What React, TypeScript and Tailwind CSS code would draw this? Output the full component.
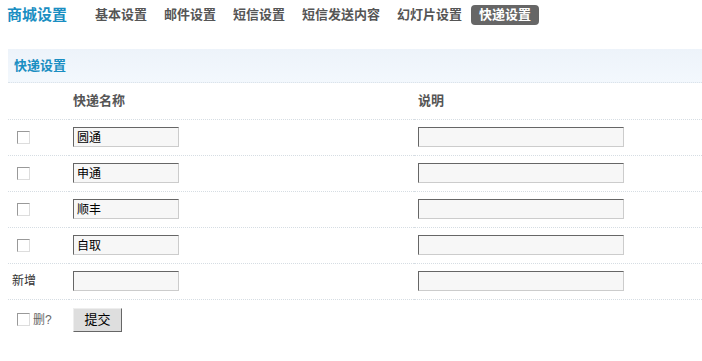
import { useState } from "react";

const navItems = ["基本设置", "邮件设置", "短信设置", "短信发送内容", "幻灯片设置", "快递设置"];
const ACTIVE_NAV = "快递设置";

const rows = ["圆通", "申通", "顺丰", "自取"];

const fontStack = "font-['Liberation_Sans','Noto_Sans_CJK_SC',sans-serif]";
const inputClass =
  "h-[20px] border border-t-[#666] border-l-[#666] border-b-[#ccc] border-r-[#ccc] bg-[#f7f7f7] px-[3px] text-[12px] leading-[18px] text-black outline-none";
const checkboxClass =
  "m-0 h-[13px] w-[13px] appearance-none border border-t-[#999] border-l-[#999] border-b-[#ddd] border-r-[#ddd] bg-white align-middle";
const rowClass = "border-b border-dotted border-[#d6dde3]";

export default function App() {
  const [names, setNames] = useState<string[]>(rows);
  const [notes, setNotes] = useState<string[]>(rows.map(() => ""));
  const [newName, setNewName] = useState("");
  const [newNote, setNewNote] = useState("");

  return (
    <div className={`min-h-screen w-[702px] bg-white ${fontStack}`}>
      <div className="flex h-[30px] items-center pl-[7px]">
        <h1 className="mr-[20px] text-[15px] font-bold leading-[20px] text-[#1a8ec2]">商城设置</h1>
        <nav className="flex items-center gap-[1px]">
          {navItems.map((item) => (
            <span
              key={item}
              className={
                item === ACTIVE_NAV
                  ? "rounded-[4px] bg-[#666] px-[8px] py-[1px] text-[13px] font-bold leading-[18px] text-white"
                  : "px-[8px] py-[1px] text-[13px] font-bold leading-[18px] text-[#555]"
              }
            >
              {item}
            </span>
          ))}
        </nav>
      </div>

      <div className="ml-[8px] mt-[19px]">
        <div className="flex h-[34px] items-center border-b border-dotted border-[#dbe3ea] bg-gradient-to-b from-[#edf3fa] to-[#f3f8fd] pl-[6px]">
          <span className="text-[13px] font-bold text-[#1a8ec2]">快递设置</span>
        </div>

        <table className="w-full border-collapse text-[12px] text-[#333]">
          <colgroup>
            <col className="w-[61px]" />
            <col className="w-[345px]" />
            <col />
          </colgroup>
          <thead>
            <tr className={`h-[36px] ${rowClass}`}>
              <th />
              <th className="px-[4px] text-left text-[13px] font-bold text-[#555]">快递名称</th>
              <th className="px-[4px] text-left text-[13px] font-bold text-[#555]">说明</th>
            </tr>
          </thead>
          <tbody>
            {names.map((name, i) => (
              <tr key={rows[i]} className={`h-[36px] ${rowClass}`}>
                <td className="pl-[9px]">
                  <input type="checkbox" className={checkboxClass} />
                </td>
                <td className="px-[4px]">
                  <input
                    className={`${inputClass} w-[106px]`}
                    value={name}
                    onChange={(e) => setNames(names.map((n, j) => (j === i ? e.target.value : n)))}
                  />
                </td>
                <td className="px-[4px]">
                  <input
                    className={`${inputClass} w-[206px]`}
                    value={notes[i]}
                    onChange={(e) => setNotes(notes.map((n, j) => (j === i ? e.target.value : n)))}
                  />
                </td>
              </tr>
            ))}
            <tr className={`h-[36px] ${rowClass}`}>
              <td className="px-[4px] text-[12px] text-[#333]">新增</td>
              <td className="px-[4px]">
                <input className={`${inputClass} w-[106px]`} value={newName} onChange={(e) => setNewName(e.target.value)} />
              </td>
              <td className="px-[4px]">
                <input className={`${inputClass} w-[206px]`} value={newNote} onChange={(e) => setNewNote(e.target.value)} />
              </td>
            </tr>
            <tr className="h-[41px]">
              <td className="pl-[9px]">
                <label className="flex items-center gap-[3px] text-[12px] text-[#666]">
                  <input type="checkbox" className={checkboxClass} />
                  删?
                </label>
              </td>
              <td className="px-[4px]">
                <button
                  type="button"
                  className="h-[24px] w-[49px] border border-t-[#eee] border-l-[#eee] border-b-[#666] border-r-[#666] bg-[#dedede] text-[13px] leading-[20px] text-black"
                >
                  提交
                </button>
              </td>
              <td />
            </tr>
          </tbody>
        </table>
      </div>
    </div>
  );
}
